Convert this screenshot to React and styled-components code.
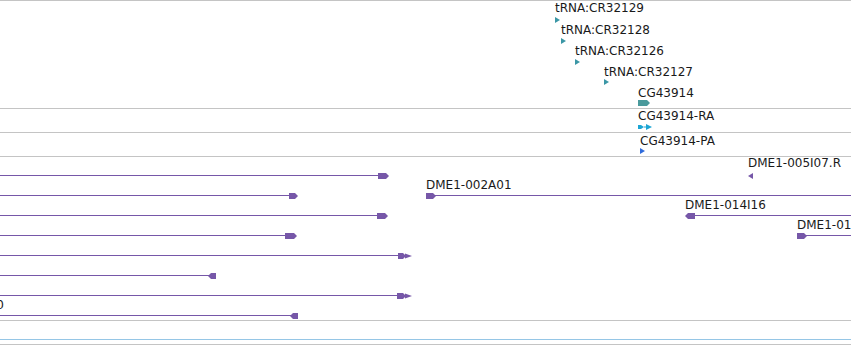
import React from "react";
import styled, { createGlobalStyle } from "styled-components";

const GlobalStyle = createGlobalStyle`
  html, body {
    margin: 0;
    padding: 0;
    background: #ffffff;
  }
  body {
    font-family: "DejaVu Sans", Verdana, sans-serif;
    overflow: hidden;
  }
`;

const Browser = styled.div`
  width: 851px;
  height: 345px;
  display: flex;
  flex-direction: column;
  overflow: hidden;
  background: #ffffff;
`;

const Track = styled.section`
  position: relative;
  flex: none;
  height: ${(props) => props.$height}px;
  border-top: 1px solid #c4c4c4;
  overflow: hidden;
`;

const DropLine = styled.div`
  flex: none;
  height: 1px;
  background: #95c6e6;
`;

const Gap = styled.div`
  flex: none;
  height: 4px;
`;

const Label = styled.span`
  position: absolute;
  font-size: 12px;
  line-height: 14px;
  color: #1a1a1a;
  white-space: nowrap;
  transform: ${(props) => (props.$anchor === "end" ? "translateX(-100%)" : "none")};
`;

const Line = styled.div`
  position: absolute;
  height: 1px;
  background: ${(props) => props.$color};
`;

const GlyphSvg = styled.svg`
  position: absolute;
  display: block;
  overflow: visible;
`;

const PURPLE = "#7657a8";
const TEAL = "#3b97a6";
const GENE = "#4a9a9c";
const CYAN = "#1ca5d4";
const BLUE = "#2f6bdc";

const shapes = {
  right: (w, h) => [`0,0 ${w - 3},0 ${w},${h / 2} ${w - 3},${h} 0,${h}`],
  left: (w, h) => [`0,${h / 2} 3,0 ${w},0 ${w},${h} 3,${h}`],
  tri: (w, h) => [`0,0 ${w},${h / 2} 0,${h}`],
  ltri: (w, h) => [`${w},0 0,${h / 2} ${w},${h}`],
  double: (w, h) => [
    `0,0 ${w - 9},0 ${w - 6},${h / 2} ${w - 9},${h} 0,${h}`,
    `${w - 7},0.5 ${w},${h / 2} ${w - 7},${h - 0.5}`,
  ],
  pair: (w, h) => [
    `0,1 3,1 ${w / 2 - 1},${h / 2} 3,${h - 1} 0,${h - 1}`,
    `${w / 2 - 1},${h / 2 - 0.5} ${w / 2 + 1},${h / 2 - 0.5} ${w / 2 + 1},${h / 2 + 0.5} ${w / 2 - 1},${h / 2 + 0.5}`,
    `${w / 2 + 1},0 ${w},${h / 2} ${w / 2 + 1},${h}`,
  ],
};

const Glyph = ({ x, y, w, h, kind, color }) => (
  <GlyphSvg width={w} height={h} style={{ left: x, top: y - h / 2 }}>
    {shapes[kind](w, h).map((points) => (
      <polygon key={points} points={points} fill={color} />
    ))}
  </GlyphSvg>
);

// coordinates are page coordinates; each track shifts them to its own origin
const tracks = [
  {
    height: 107,
    features: [
      { label: "tRNA:CR32129", x: 555, base: 12, glyph: { x: 555, y: 19, w: 5, h: 6, kind: "tri", color: TEAL } },
      { label: "tRNA:CR32128", x: 561, base: 34, glyph: { x: 561, y: 40, w: 5, h: 6, kind: "tri", color: TEAL } },
      { label: "tRNA:CR32126", x: 575, base: 55, glyph: { x: 575, y: 61, w: 5, h: 6, kind: "tri", color: TEAL } },
      { label: "tRNA:CR32127", x: 604, base: 76, glyph: { x: 604, y: 81.5, w: 5, h: 6, kind: "tri", color: TEAL } },
      { label: "CG43914", x: 638, base: 97, glyph: { x: 638, y: 102.5, w: 12, h: 6, kind: "right", color: GENE } },
    ],
  },
  {
    height: 23,
    features: [
      { label: "CG43914-RA", x: 638, base: 120, glyph: { x: 638, y: 126.5, w: 14, h: 6, kind: "pair", color: CYAN } },
    ],
  },
  {
    height: 23,
    features: [
      { label: "CG43914-PA", x: 640, base: 145, glyph: { x: 640, y: 150.5, w: 5, h: 6, kind: "tri", color: BLUE } },
    ],
  },
  {
    height: 163,
    features: [
      { line: [0, 381], glyph: { x: 378, y: 175, w: 11, h: 6, kind: "right", color: PURPLE } },
      { label: "DME1-005I07.R", x: 748, base: 167, glyph: { x: 748, y: 175, w: 5, h: 6, kind: "ltri", color: PURPLE } },
      { line: [0, 291], glyph: { x: 289, y: 195, w: 9, h: 6, kind: "right", color: PURPLE } },
      { label: "DME1-002A01", x: 426, base: 189, line: [430, 851], glyph: { x: 426, y: 195, w: 10, h: 6, kind: "right", color: PURPLE } },
      { line: [0, 380], glyph: { x: 377, y: 215, w: 11, h: 6, kind: "right", color: PURPLE } },
      { label: "DME1-014I16", x: 685, base: 209, line: [690, 851], glyph: { x: 685, y: 215, w: 10, h: 6, kind: "left", color: PURPLE } },
      { line: [0, 288], glyph: { x: 285, y: 235, w: 12, h: 6, kind: "right", color: PURPLE } },
      { label: "DME1-018F05", x: 797, base: 229, line: [800, 851], glyph: { x: 797, y: 235, w: 10, h: 6, kind: "right", color: PURPLE } },
      { line: [0, 400], glyph: { x: 398, y: 255, w: 14, h: 6, kind: "double", color: PURPLE } },
      { line: [0, 212], glyph: { x: 208, y: 275, w: 8, h: 6, kind: "left", color: PURPLE } },
      { line: [0, 400], glyph: { x: 397, y: 295, w: 15, h: 6, kind: "double", color: PURPLE } },
      { label: "DME1-010B20", x: 4, anchor: "end", base: 309, line: [0, 294], glyph: { x: 290, y: 315, w: 8, h: 6, kind: "left", color: PURPLE } },
    ],
  },
  { height: 18, features: [] },
];

const FeatureTrack = ({ height, origin, features }) => {
  const top = origin + 1;
  return (
    <Track $height={height}>
      {features.map((f, i) => {
        const lineY = f.glyph.y;
        return (
          <React.Fragment key={i}>
            {f.line && (
              <Line
                $color={f.glyph.color}
                style={{ left: f.line[0], width: f.line[1] - f.line[0], top: Math.floor(lineY) - top }}
              />
            )}
            <Glyph {...f.glyph} y={lineY - top + 0.5} />
            {f.label && (
              <Label $anchor={f.anchor} style={{ left: f.x, top: f.base - 11 - top }}>
                {f.label}
              </Label>
            )}
          </React.Fragment>
        );
      })}
    </Track>
  );
};

const App = () => {
  let origin = 0;
  const laid = tracks.map((t) => {
    const item = { ...t, origin };
    origin += t.height + 1;
    return item;
  });

  return (
    <>
      <GlobalStyle />
      <Browser>
        {laid.map((t, i) => (
          <FeatureTrack key={i} {...t} />
        ))}
        <DropLine />
        <Gap />
        <Track $height={10} />
      </Browser>
    </>
  );
};

export default App;
